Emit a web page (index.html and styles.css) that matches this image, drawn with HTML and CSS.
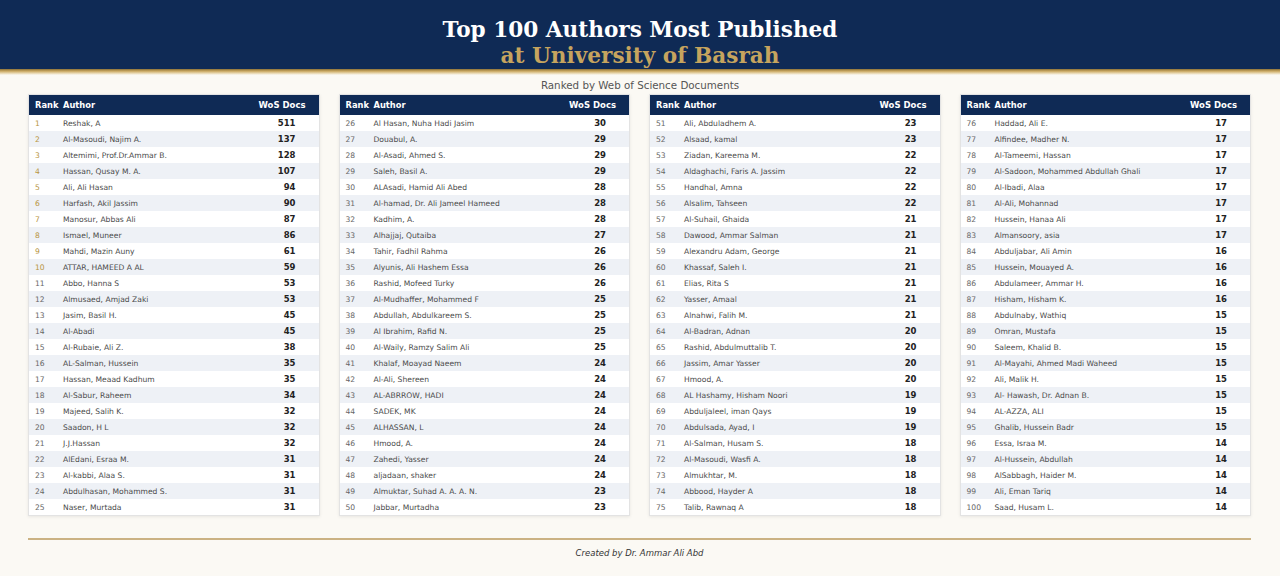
FILE: index.html
```html
<!DOCTYPE html>
<html lang="en">
<head>
<meta charset="utf-8">
<title>Top 100 Authors Most Published at University of Basrah</title>
<link rel="stylesheet" href="styles.css">
</head>
<body>
<header class="banner">
  <h1 class="title"><span class="t1">Top 100 Authors Most Published</span><span class="t2">at University of Basrah</span></h1>
</header>
<div class="band"></div>
<p class="subtitle">Ranked by Web of Science Documents</p>
<main class="tables">
  <section class="tbl">
    <div class="head"><span class="rk">Rank</span><span class="nm">Author</span><span class="dc">WoS Docs</span></div>
    <div class="row top"><span class="rk">1</span><span class="nm">Reshak, A</span><span class="dc">511</span></div>
    <div class="row top"><span class="rk">2</span><span class="nm">Al-Masoudi, Najim A.</span><span class="dc">137</span></div>
    <div class="row top"><span class="rk">3</span><span class="nm">Altemimi, Prof.Dr.Ammar B.</span><span class="dc">128</span></div>
    <div class="row top"><span class="rk">4</span><span class="nm">Hassan, Qusay M. A.</span><span class="dc">107</span></div>
    <div class="row top"><span class="rk">5</span><span class="nm">Ali, Ali Hasan</span><span class="dc">94</span></div>
    <div class="row top"><span class="rk">6</span><span class="nm">Harfash, Akil Jassim</span><span class="dc">90</span></div>
    <div class="row top"><span class="rk">7</span><span class="nm">Manosur, Abbas Ali</span><span class="dc">87</span></div>
    <div class="row top"><span class="rk">8</span><span class="nm">Ismael, Muneer</span><span class="dc">86</span></div>
    <div class="row top"><span class="rk">9</span><span class="nm">Mahdi, Mazin Auny</span><span class="dc">61</span></div>
    <div class="row top"><span class="rk">10</span><span class="nm">ATTAR, HAMEED A AL</span><span class="dc">59</span></div>
    <div class="row"><span class="rk">11</span><span class="nm">Abbo, Hanna S</span><span class="dc">53</span></div>
    <div class="row"><span class="rk">12</span><span class="nm">Almusaed, Amjad Zaki</span><span class="dc">53</span></div>
    <div class="row"><span class="rk">13</span><span class="nm">Jasim, Basil H.</span><span class="dc">45</span></div>
    <div class="row"><span class="rk">14</span><span class="nm">Al-Abadi</span><span class="dc">45</span></div>
    <div class="row"><span class="rk">15</span><span class="nm">Al-Rubaie, Ali Z.</span><span class="dc">38</span></div>
    <div class="row"><span class="rk">16</span><span class="nm">AL-Salman, Hussein</span><span class="dc">35</span></div>
    <div class="row"><span class="rk">17</span><span class="nm">Hassan, Meaad Kadhum</span><span class="dc">35</span></div>
    <div class="row"><span class="rk">18</span><span class="nm">Al-Sabur, Raheem</span><span class="dc">34</span></div>
    <div class="row"><span class="rk">19</span><span class="nm">Majeed, Salih K.</span><span class="dc">32</span></div>
    <div class="row"><span class="rk">20</span><span class="nm">Saadon, H L</span><span class="dc">32</span></div>
    <div class="row"><span class="rk">21</span><span class="nm">J.J.Hassan</span><span class="dc">32</span></div>
    <div class="row"><span class="rk">22</span><span class="nm">AlEdani, Esraa M.</span><span class="dc">31</span></div>
    <div class="row"><span class="rk">23</span><span class="nm">Al-kabbi, Alaa S.</span><span class="dc">31</span></div>
    <div class="row"><span class="rk">24</span><span class="nm">Abdulhasan, Mohammed S.</span><span class="dc">31</span></div>
    <div class="row"><span class="rk">25</span><span class="nm">Naser, Murtada</span><span class="dc">31</span></div>
  </section>
  <section class="tbl">
    <div class="head"><span class="rk">Rank</span><span class="nm">Author</span><span class="dc">WoS Docs</span></div>
    <div class="row"><span class="rk">26</span><span class="nm">Al Hasan, Nuha Hadi Jasim</span><span class="dc">30</span></div>
    <div class="row"><span class="rk">27</span><span class="nm">Douabul, A.</span><span class="dc">29</span></div>
    <div class="row"><span class="rk">28</span><span class="nm">Al-Asadi, Ahmed S.</span><span class="dc">29</span></div>
    <div class="row"><span class="rk">29</span><span class="nm">Saleh, Basil A.</span><span class="dc">29</span></div>
    <div class="row"><span class="rk">30</span><span class="nm">ALAsadi, Hamid Ali Abed</span><span class="dc">28</span></div>
    <div class="row"><span class="rk">31</span><span class="nm">Al-hamad, Dr. Ali Jameel Hameed</span><span class="dc">28</span></div>
    <div class="row"><span class="rk">32</span><span class="nm">Kadhim, A.</span><span class="dc">28</span></div>
    <div class="row"><span class="rk">33</span><span class="nm">Alhajjaj, Qutaiba</span><span class="dc">27</span></div>
    <div class="row"><span class="rk">34</span><span class="nm">Tahir, Fadhil Rahma</span><span class="dc">26</span></div>
    <div class="row"><span class="rk">35</span><span class="nm">Alyunis, Ali Hashem Essa</span><span class="dc">26</span></div>
    <div class="row"><span class="rk">36</span><span class="nm">Rashid, Mofeed Turky</span><span class="dc">26</span></div>
    <div class="row"><span class="rk">37</span><span class="nm">Al-Mudhaffer, Mohammed F</span><span class="dc">25</span></div>
    <div class="row"><span class="rk">38</span><span class="nm">Abdullah, Abdulkareem S.</span><span class="dc">25</span></div>
    <div class="row"><span class="rk">39</span><span class="nm">Al Ibrahim, Rafid N.</span><span class="dc">25</span></div>
    <div class="row"><span class="rk">40</span><span class="nm">Al-Waily, Ramzy Salim Ali</span><span class="dc">25</span></div>
    <div class="row"><span class="rk">41</span><span class="nm">Khalaf, Moayad Naeem</span><span class="dc">24</span></div>
    <div class="row"><span class="rk">42</span><span class="nm">Al-Ali, Shereen</span><span class="dc">24</span></div>
    <div class="row"><span class="rk">43</span><span class="nm">AL-ABRROW, HADI</span><span class="dc">24</span></div>
    <div class="row"><span class="rk">44</span><span class="nm">SADEK, MK</span><span class="dc">24</span></div>
    <div class="row"><span class="rk">45</span><span class="nm">ALHASSAN, L</span><span class="dc">24</span></div>
    <div class="row"><span class="rk">46</span><span class="nm">Hmood, A.</span><span class="dc">24</span></div>
    <div class="row"><span class="rk">47</span><span class="nm">Zahedi, Yasser</span><span class="dc">24</span></div>
    <div class="row"><span class="rk">48</span><span class="nm">aljadaan, shaker</span><span class="dc">24</span></div>
    <div class="row"><span class="rk">49</span><span class="nm">Almuktar, Suhad A. A. A. N.</span><span class="dc">23</span></div>
    <div class="row"><span class="rk">50</span><span class="nm">Jabbar, Murtadha</span><span class="dc">23</span></div>
  </section>
  <section class="tbl">
    <div class="head"><span class="rk">Rank</span><span class="nm">Author</span><span class="dc">WoS Docs</span></div>
    <div class="row"><span class="rk">51</span><span class="nm">Ali, Abduladhem A.</span><span class="dc">23</span></div>
    <div class="row"><span class="rk">52</span><span class="nm">Alsaad, kamal</span><span class="dc">23</span></div>
    <div class="row"><span class="rk">53</span><span class="nm">Ziadan, Kareema M.</span><span class="dc">22</span></div>
    <div class="row"><span class="rk">54</span><span class="nm">Aldaghachi, Faris A. Jassim</span><span class="dc">22</span></div>
    <div class="row"><span class="rk">55</span><span class="nm">Handhal, Amna</span><span class="dc">22</span></div>
    <div class="row"><span class="rk">56</span><span class="nm">Alsalim, Tahseen</span><span class="dc">22</span></div>
    <div class="row"><span class="rk">57</span><span class="nm">Al-Suhail, Ghaida</span><span class="dc">21</span></div>
    <div class="row"><span class="rk">58</span><span class="nm">Dawood, Ammar Salman</span><span class="dc">21</span></div>
    <div class="row"><span class="rk">59</span><span class="nm">Alexandru Adam, George</span><span class="dc">21</span></div>
    <div class="row"><span class="rk">60</span><span class="nm">Khassaf, Saleh I.</span><span class="dc">21</span></div>
    <div class="row"><span class="rk">61</span><span class="nm">Elias, Rita S</span><span class="dc">21</span></div>
    <div class="row"><span class="rk">62</span><span class="nm">Yasser, Amaal</span><span class="dc">21</span></div>
    <div class="row"><span class="rk">63</span><span class="nm">Alnahwi, Falih M.</span><span class="dc">21</span></div>
    <div class="row"><span class="rk">64</span><span class="nm">Al-Badran, Adnan</span><span class="dc">20</span></div>
    <div class="row"><span class="rk">65</span><span class="nm">Rashid, Abdulmuttalib T.</span><span class="dc">20</span></div>
    <div class="row"><span class="rk">66</span><span class="nm">Jassim, Amar Yasser</span><span class="dc">20</span></div>
    <div class="row"><span class="rk">67</span><span class="nm">Hmood, A.</span><span class="dc">20</span></div>
    <div class="row"><span class="rk">68</span><span class="nm">AL Hashamy, Hisham Noori</span><span class="dc">19</span></div>
    <div class="row"><span class="rk">69</span><span class="nm">Abduljaleel, iman Qays</span><span class="dc">19</span></div>
    <div class="row"><span class="rk">70</span><span class="nm">Abdulsada, Ayad, I</span><span class="dc">19</span></div>
    <div class="row"><span class="rk">71</span><span class="nm">Al-Salman, Husam S.</span><span class="dc">18</span></div>
    <div class="row"><span class="rk">72</span><span class="nm">Al-Masoudi, Wasfi A.</span><span class="dc">18</span></div>
    <div class="row"><span class="rk">73</span><span class="nm">Almukhtar, M.</span><span class="dc">18</span></div>
    <div class="row"><span class="rk">74</span><span class="nm">Abbood, Hayder A</span><span class="dc">18</span></div>
    <div class="row"><span class="rk">75</span><span class="nm">Talib, Rawnaq A</span><span class="dc">18</span></div>
  </section>
  <section class="tbl">
    <div class="head"><span class="rk">Rank</span><span class="nm">Author</span><span class="dc">WoS Docs</span></div>
    <div class="row"><span class="rk">76</span><span class="nm">Haddad, Ali E.</span><span class="dc">17</span></div>
    <div class="row"><span class="rk">77</span><span class="nm">Alfindee, Madher N.</span><span class="dc">17</span></div>
    <div class="row"><span class="rk">78</span><span class="nm">Al-Tameemi, Hassan</span><span class="dc">17</span></div>
    <div class="row"><span class="rk">79</span><span class="nm">Al-Sadoon, Mohammed Abdullah Ghali</span><span class="dc">17</span></div>
    <div class="row"><span class="rk">80</span><span class="nm">Al-Ibadi, Alaa</span><span class="dc">17</span></div>
    <div class="row"><span class="rk">81</span><span class="nm">Al-Ali, Mohannad</span><span class="dc">17</span></div>
    <div class="row"><span class="rk">82</span><span class="nm">Hussein, Hanaa Ali</span><span class="dc">17</span></div>
    <div class="row"><span class="rk">83</span><span class="nm">Almansoory, asia</span><span class="dc">17</span></div>
    <div class="row"><span class="rk">84</span><span class="nm">Abduljabar, Ali Amin</span><span class="dc">16</span></div>
    <div class="row"><span class="rk">85</span><span class="nm">Hussein, Mouayed A.</span><span class="dc">16</span></div>
    <div class="row"><span class="rk">86</span><span class="nm">Abdulameer, Ammar H.</span><span class="dc">16</span></div>
    <div class="row"><span class="rk">87</span><span class="nm">Hisham, Hisham K.</span><span class="dc">16</span></div>
    <div class="row"><span class="rk">88</span><span class="nm">Abdulnaby, Wathiq</span><span class="dc">15</span></div>
    <div class="row"><span class="rk">89</span><span class="nm">Omran, Mustafa</span><span class="dc">15</span></div>
    <div class="row"><span class="rk">90</span><span class="nm">Saleem, Khalid B.</span><span class="dc">15</span></div>
    <div class="row"><span class="rk">91</span><span class="nm">Al-Mayahi, Ahmed Madi Waheed</span><span class="dc">15</span></div>
    <div class="row"><span class="rk">92</span><span class="nm">Ali, Malik H.</span><span class="dc">15</span></div>
    <div class="row"><span class="rk">93</span><span class="nm">Al- Hawash, Dr. Adnan B.</span><span class="dc">15</span></div>
    <div class="row"><span class="rk">94</span><span class="nm">AL-AZZA, ALI</span><span class="dc">15</span></div>
    <div class="row"><span class="rk">95</span><span class="nm">Ghalib, Hussein Badr</span><span class="dc">15</span></div>
    <div class="row"><span class="rk">96</span><span class="nm">Essa, Israa M.</span><span class="dc">14</span></div>
    <div class="row"><span class="rk">97</span><span class="nm">Al-Hussein, Abdullah</span><span class="dc">14</span></div>
    <div class="row"><span class="rk">98</span><span class="nm">AlSabbagh, Haider M.</span><span class="dc">14</span></div>
    <div class="row"><span class="rk">99</span><span class="nm">Ali, Eman Tariq</span><span class="dc">14</span></div>
    <div class="row"><span class="rk">100</span><span class="nm">Saad, Husam L.</span><span class="dc">14</span></div>
  </section>
</main>
<footer class="footer">
  <p class="credit">Created by Dr. Ammar Ali Abd</p>
</footer>
</body>
</html>
```
FILE: styles.css
```css
* { box-sizing: border-box; }
html, body { margin: 0; padding: 0; }
body {
  width: 1280px;
  height: 576px;
  overflow: hidden;
  background: #fbf9f4;
  font-family: "DejaVu Sans", "Liberation Sans", sans-serif;
  color: #444;
}
.banner {
  background: #0f2a55;
  height: 69px;
  display: flex;
  align-items: center;
  justify-content: center;
}
.title {
  margin: 0;
  font-family: "DejaVu Serif", "Liberation Serif", serif;
  font-weight: bold;
  font-size: 21.6px;
  line-height: 26px;
  text-align: center;
  display: flex;
  flex-direction: column;
  padding-top: 17px;
}
.t1 { color: #ffffff; }
.t2 { color: #c6a45e; }
.band {
  height: 6px;
  background: linear-gradient(to bottom, #8a7039 0%, #c9a75f 35%, #e8d6ae 70%, #fbf9f4 100%);
}
.subtitle {
  margin: 0;
  height: 19px;
  line-height: 20px;
  text-align: center;
  font-size: 10.3px;
  color: #555;
}
.tables {
  display: grid;
  grid-template-columns: repeat(4, 1fr);
  column-gap: 19px;
  padding: 0 29px 0 28px;
}
.tbl {
  background: #fff;
  border: 1px solid #e3e3e3;
  box-shadow: 0 1px 3px rgba(0,0,0,0.08);
}
.head, .row {
  display: grid;
  grid-template-columns: 28px 1fr auto;
  align-items: center;
  padding-left: 6px;
}
.head {
  height: 20px;
  background: #0f2a55;
  color: #fff;
  font-weight: bold;
  font-size: 8.3px;
  padding-right: 13px;
}
.head .dc { font-size: 8.5px; }
.row {
  height: 16px;
  font-size: 7.6px;
  padding-right: 23px;
}
.row:nth-child(odd) { background: #eef1f6; }
.row .rk { color: #666; }
.row.top .rk { color: #b8953f; }
.row .nm { color: #4a4a4a; white-space: nowrap; }
.row .dc { font-weight: bold; color: #222; font-size: 8.5px; text-align: right; }
.footer {
  margin: 22px 29px 0 28px;
  border-top: 2px solid #cbb283;
}
.credit {
  margin: 0;
  padding-top: 8px;
  text-align: center;
  font-style: italic;
  font-size: 8.5px;
  color: #333;
}
```
